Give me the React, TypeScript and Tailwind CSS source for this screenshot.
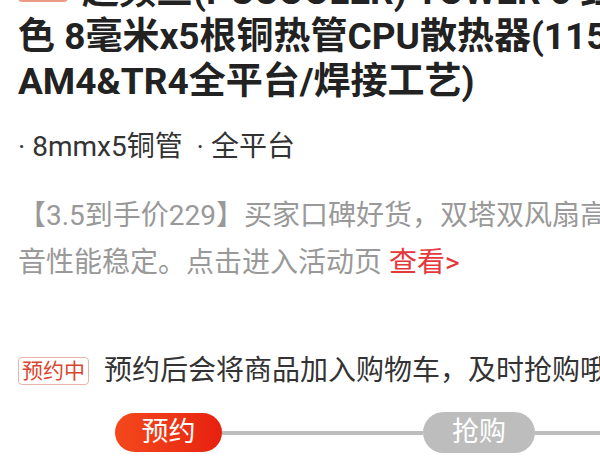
export default function App() {
  const font = { fontFamily: "Roboto, 'Noto Sans CJK SC', sans-serif" };
  return (
    <div className="w-[600px] h-[470px] overflow-hidden bg-white" style={font}>
      <div className="pl-[18px] mt-[-31px]">
        <h1 className="text-[37px] leading-[45px] font-bold text-[#222] whitespace-nowrap">
          <span className="inline-block w-[50px] h-[30px] mr-[14px] align-[2px] rounded-[4px] bg-[#ec9c84]"></span>
          超频三(PCCOOLER) TOWER 5 红黑
          <br />
          色 8毫米x5根铜热管CPU散热器(1151/
          <br />
          AM4&amp;TR4全平台/焊接工艺)
        </h1>
        <div className="mt-[25px] text-[28px] leading-[36px] text-[#333] whitespace-nowrap">
          · 8mmx5铜管 &nbsp;· 全平台
        </div>
        <p className="mt-[27px] text-[28px] leading-[47px] text-[#999] whitespace-nowrap">
          【3.5到手价229】买家口碑好货，双塔双风扇高
          <br />
          音性能稳定。点击进入活动页 <span className="text-[#e4393c]">查看&gt;</span>
        </p>
        <div className="mt-[64px] flex items-center whitespace-nowrap">
          <span className="border border-[#eab4ac] rounded-[4px] text-[#d9452e] text-[21px] leading-[26px] px-[3px] h-[28px]">
            预约中
          </span>
          <span className="ml-[15px] text-[28px] text-[#333]">预约后会将商品加入购物车，及时抢购哦</span>
        </div>
      </div>
      <div className="mt-[20px] flex items-center">
        <div className="w-[115px]"></div>
        <div className="w-[107px] h-[39px] rounded-full bg-gradient-to-r from-[#f4481c] to-[#e71f10] text-white text-[27px] flex items-center justify-center">
          预约
        </div>
        <div className="w-[201px] h-[4px] bg-[#bdbdbd]"></div>
        <div className="w-[112px] h-[41px] rounded-full bg-[#bdbdbd] text-white text-[27px] flex items-center justify-center">
          抢购
        </div>
        <div className="flex-1 h-[4px] bg-[#bdbdbd]"></div>
      </div>
    </div>
  );
}
